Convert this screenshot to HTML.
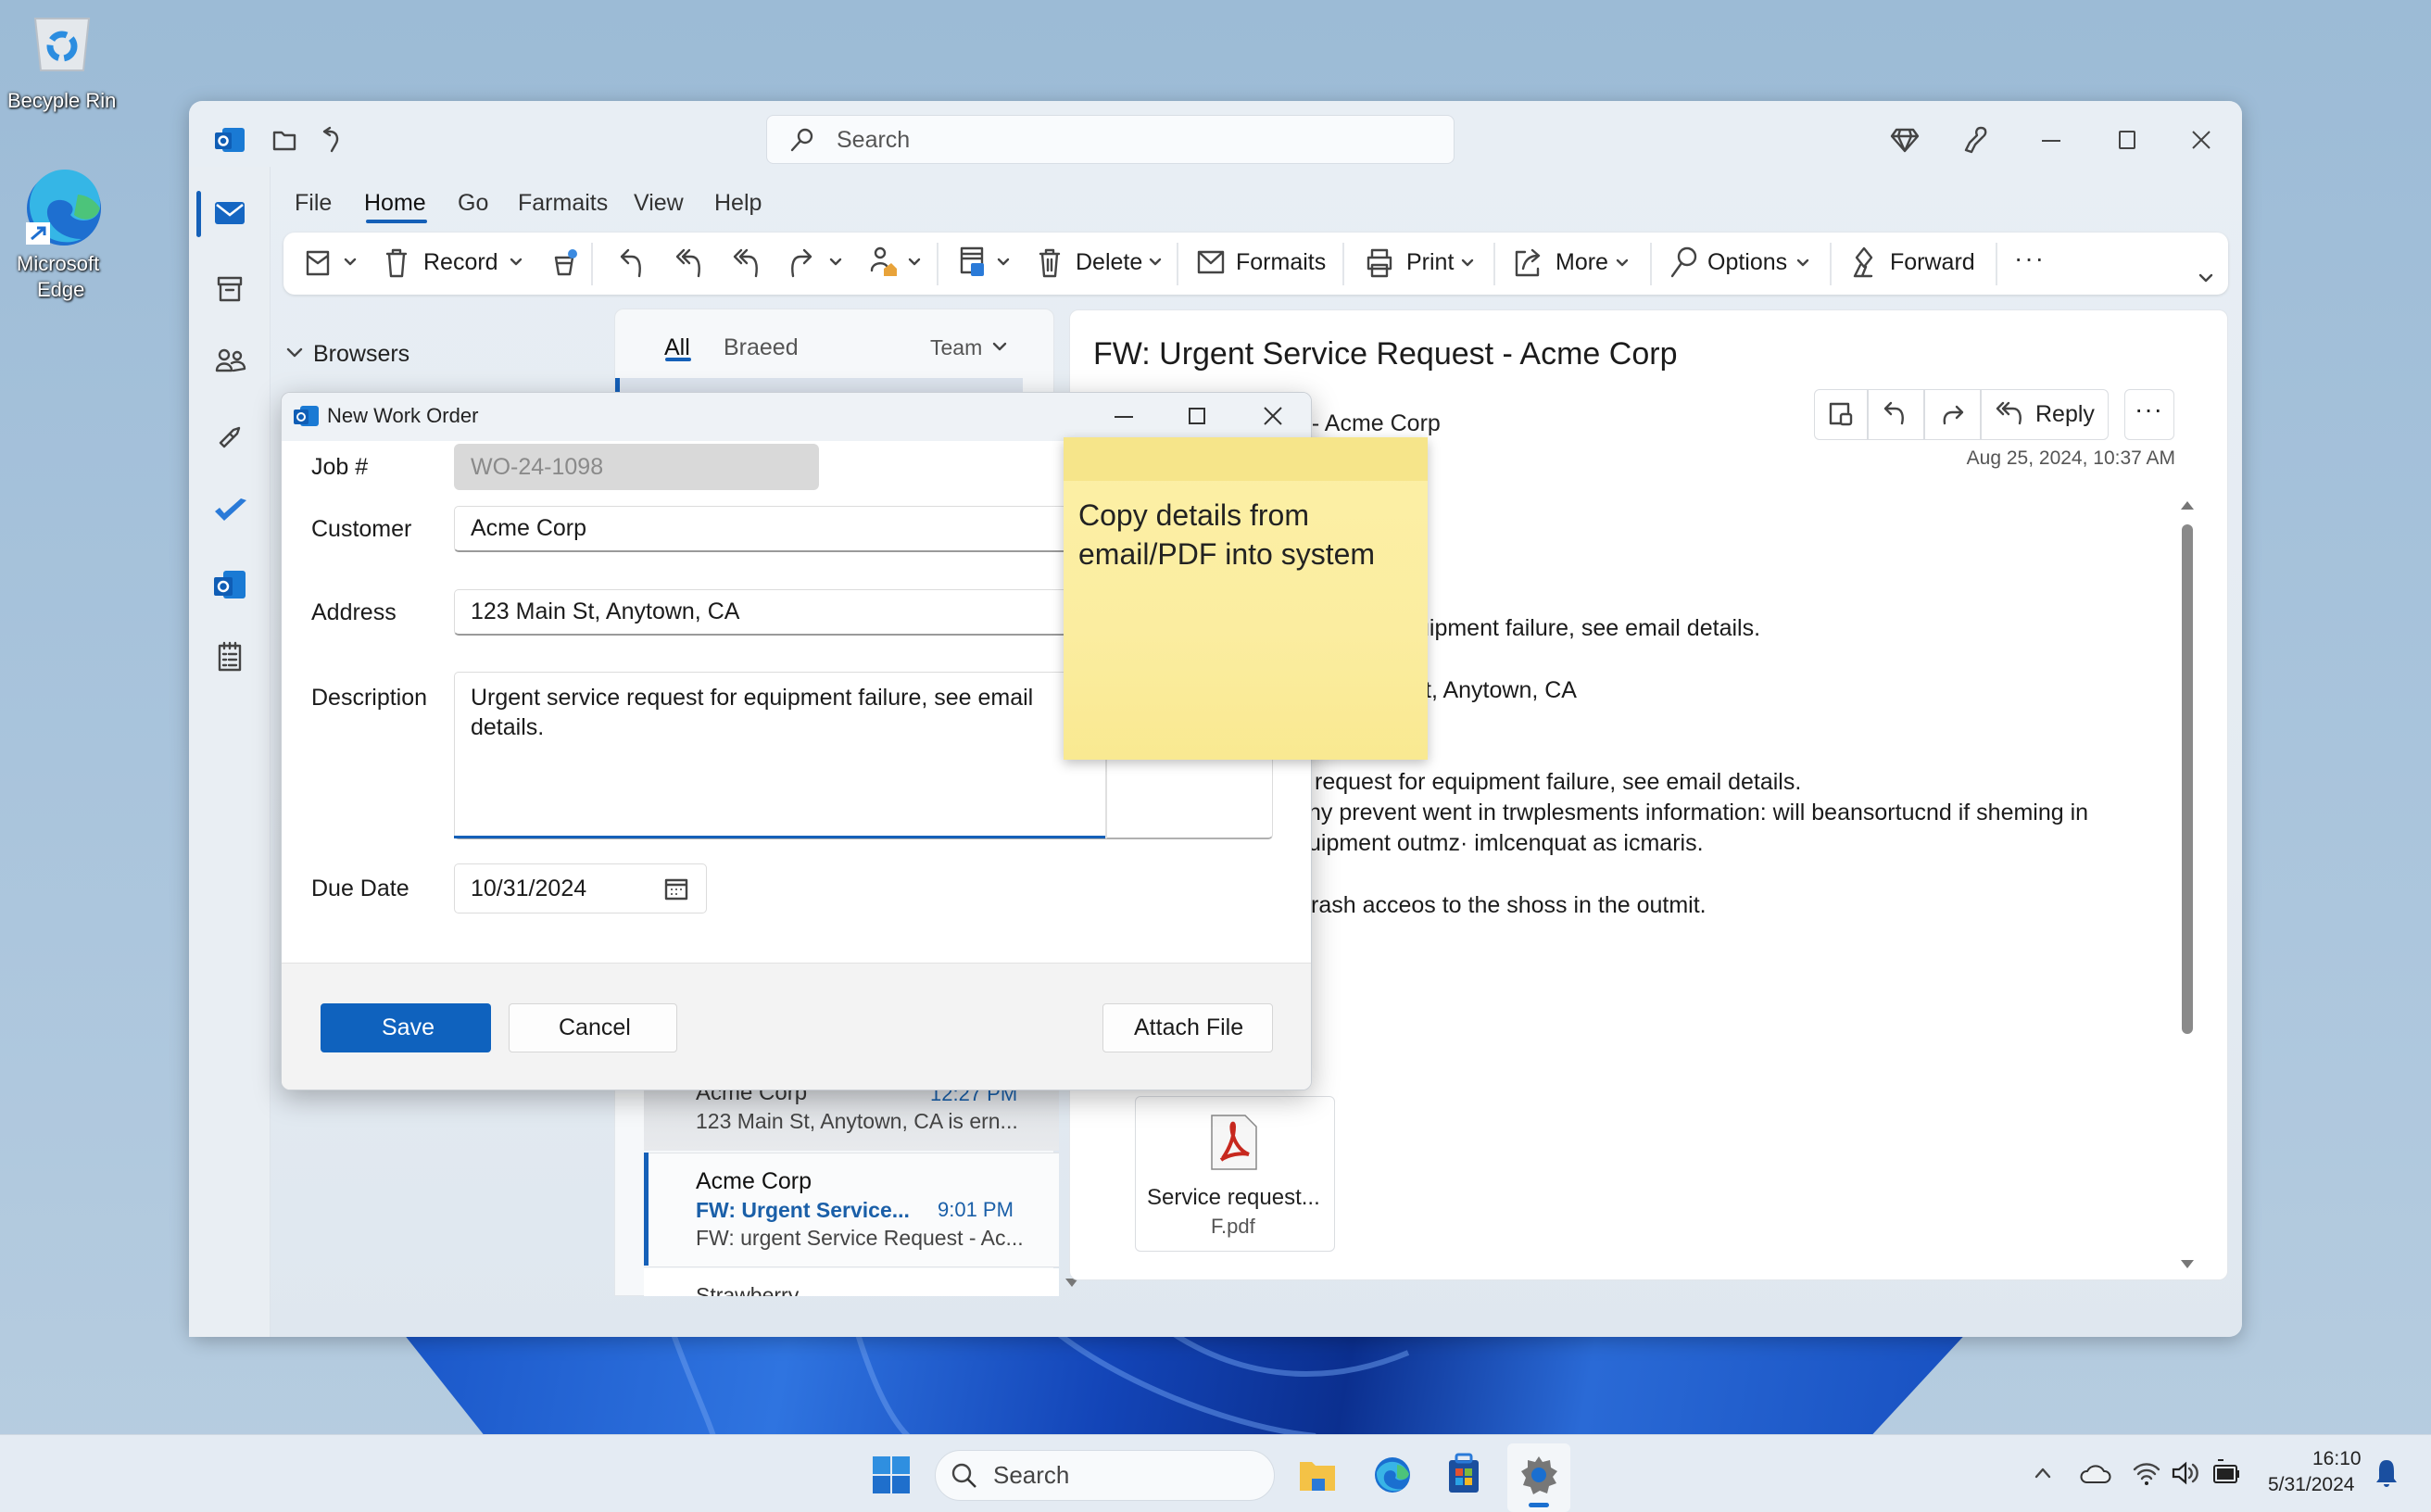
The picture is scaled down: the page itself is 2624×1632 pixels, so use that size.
<!DOCTYPE html>
<html><head><meta charset="utf-8">
<style>
*{margin:0;padding:0;box-sizing:border-box}
body{width:2624px;height:1632px;overflow:hidden;position:relative;font-family:"Liberation Sans",sans-serif;color:#1b1b1b;
background:linear-gradient(180deg,#9cbbd6 0%,#a9c4dc 50%,#b7cde0 100%)}
.a{position:absolute}
.t{position:absolute;white-space:nowrap;line-height:1.2}
svg{position:absolute;overflow:visible}
.sep{position:absolute;top:262px;width:2px;height:46px;background:#e3e6ea}
.ico{fill:none;stroke:#444;stroke-width:2.4;stroke-linecap:round;stroke-linejoin:round}
</style></head><body>

<!-- wallpaper bloom -->
<div class="a" style="left:420px;top:1420px;width:1720px;height:130px;background:linear-gradient(100deg,#1a56c8 0%,#2f74e0 25%,#1345b8 45%,#0b2f8f 60%,#2a6ad6 75%,#174fc0 100%);clip-path:polygon(0 0,100% 0,93% 100%,6% 100%)"></div>
<svg style="left:420px;top:1420px" width="1720" height="130"><path d="M700 0 C760 60 900 120 1000 130 M820 0 C880 50 980 90 1100 40 M300 0 C320 60 340 100 350 130 M500 0 C520 70 540 110 560 130" stroke="#6ea0ef" stroke-width="6" fill="none" opacity=".5"/></svg>

<!-- desktop icons -->
<svg style="left:34px;top:14px" width="66" height="68"><path d="M4 6 L62 6 L56 62 L10 62 Z" fill="#e4e8ec" stroke="#b9c0c8" stroke-width="2"/><circle cx="33" cy="36" r="13" fill="none" stroke="#2b8de0" stroke-width="7" stroke-dasharray="18 6"/></svg>
<div class="t" style="left:8px;top:96px;font-size:22px;color:#fff;text-shadow:0 0 3px #000,1px 1px 2px #000">Becyple Rin</div>
<svg style="left:24px;top:180px" width="90" height="90"><circle cx="45" cy="45" r="40" fill="#1e6fd0"/><path d="M8 40 A38 38 0 0 1 84 42 C84 60 60 62 52 52 C62 40 40 30 30 40 C20 52 35 78 64 78 A40 40 0 0 1 8 40Z" fill="#35b6e6"/><path d="M60 30 A30 30 0 0 1 84 45 C80 58 66 60 56 52Z" fill="#4cc47a"/><rect x="4" y="60" width="26" height="24" fill="#fff"/><path d="M10 78 L24 66 M16 66 L24 66 L24 74" stroke="#1e6fd0" stroke-width="3" fill="none"/></svg>
<div class="t" style="left:18px;top:272px;font-size:22px;color:#fff;text-shadow:0 0 3px #000,1px 1px 2px #000">Microsoft</div>
<div class="t" style="left:40px;top:300px;font-size:22px;color:#fff;text-shadow:0 0 3px #000,1px 1px 2px #000">Edge</div>

<!-- main window -->
<div class="a" style="left:204px;top:109px;width:2216px;height:1334px;border-radius:14px;background:linear-gradient(180deg,#e8eef4,#e4ebf2 60%,#dfe7ef);box-shadow:0 4px 20px rgba(0,0,0,.25)"></div>
<!-- left rail -->
<div class="a" style="left:204px;top:180px;width:88px;height:1263px;background:#e9eef3;border-right:1px solid #dde3ea"></div>
<div class="a" style="left:212px;top:206px;width:5px;height:50px;background:#1560b8;border-radius:3px"></div>
<!-- title bar icons -->
<svg style="left:230px;top:136px" width="36" height="32"><rect x="10" y="2" width="24" height="26" rx="3" fill="#1a7ad4"/><rect x="2" y="7" width="18" height="18" rx="2" fill="#0f5db5"/><circle cx="11" cy="16" r="4.5" fill="none" stroke="#fff" stroke-width="2.5"/></svg>
<svg style="left:294px;top:139px" width="26" height="24"><path class="ico" d="M2 4 H10 L13 7 H24 V22 H2 Z" stroke="#777" stroke-width="2"/></svg>
<svg style="left:346px;top:136px" width="22" height="30"><path class="ico" d="M4 6 L10 2 M4 6 L10 10 M4 6 H10 C18 6 20 14 16 20 L12 27" stroke="#777" stroke-width="2"/></svg>
<!-- search -->
<div class="a" style="left:827px;top:124px;width:743px;height:53px;background:#f9fbfd;border:1px solid #d8dee5;border-radius:8px"></div>
<svg style="left:852px;top:137px" width="28" height="28"><circle cx="17" cy="10" r="7" class="ico" stroke="#555" stroke-width="2.2"/><path d="M12 15 L3 25" class="ico" stroke="#555" stroke-width="2.2"/></svg>
<div class="t" style="left:903px;top:136px;font-size:25px;color:#555">Search</div>
<!-- right caption -->
<svg style="left:2041px;top:138px" width="30" height="26"><path class="ico" stroke="#666" stroke-width="2" d="M6 2 H24 L29 9 L15 25 L1 9 Z M1 9 H29 M10 2 L8 9 L15 25 L22 9 L20 2"/></svg>
<svg style="left:2118px;top:136px" width="28" height="30"><path class="ico" stroke="#666" stroke-width="2" d="M20 2 C26 2 27 8 22 12 L14 20 L10 28 L4 26 L8 18 L16 10 C14 6 16 2 20 2 Z"/></svg>
<div class="a" style="left:2204px;top:151px;width:20px;height:2px;background:#444"></div>
<div class="a" style="left:2287px;top:141px;width:18px;height:20px;border:2px solid #444;border-radius:2px"></div>
<svg style="left:2366px;top:141px" width="20" height="20"><path d="M1 1 L19 19 M19 1 L1 19" stroke="#444" stroke-width="2"/></svg>

<!-- rail icons -->
<svg style="left:231px;top:216px" width="34" height="28"><rect x="1" y="2" width="32" height="24" rx="3" fill="#1566c2"/><path d="M3 5 L17 16 L31 5" stroke="#fff" stroke-width="2.5" fill="none"/></svg>
<svg style="left:234px;top:298px" width="28" height="28"><path class="ico" stroke="#555" stroke-width="2.2" d="M2 2 H26 V9 H2 Z M4 9 V26 H24 V9 M10 15 H18"/></svg>
<svg style="left:232px;top:376px" width="34" height="28"><circle cx="10" cy="7" r="5" class="ico" stroke="#555" stroke-width="2"/><circle cx="24" cy="8" r="4" class="ico" stroke="#555" stroke-width="2"/><path class="ico" stroke="#555" stroke-width="2" d="M2 24 C2 14 18 14 18 24 Z M18 16 C24 13 32 15 32 22 L20 24"/></svg>
<svg style="left:234px;top:458px" width="28" height="26"><path class="ico" stroke="#556" stroke-width="2.2" d="M4 20 L18 6 L24 4 L22 10 L8 24 Z M4 20 L8 24 M14 10 L18 14"/></svg>
<svg style="left:230px;top:536px" width="38" height="30"><path d="M2 16 L12 26 L36 4 L30 2 L12 18 L7 12 Z" fill="#2a7ad8"/></svg>
<svg style="left:229px;top:614px" width="38" height="34"><rect x="12" y="2" width="24" height="30" rx="3" fill="#1a7ad4"/><rect x="2" y="9" width="20" height="20" rx="2" fill="#0f5db5"/><circle cx="12" cy="19" r="5" fill="none" stroke="#fff" stroke-width="2.5"/></svg>
<svg style="left:234px;top:693px" width="28" height="32"><path class="ico" stroke="#555" stroke-width="2" d="M3 4 H25 V30 H3 Z M8 1 V7 M14 1 V7 M20 1 V7 M7 13 H10 M13 13 H21 M7 19 H10 M13 19 H21 M7 25 H10 M13 25 H21"/></svg>

<!-- menu -->
<div class="t" style="left:318px;top:204px;font-size:25px;color:#333">File</div>
<div class="t" style="left:393px;top:204px;font-size:25px;color:#111">Home</div>
<div class="a" style="left:395px;top:237px;width:66px;height:4px;background:#1560b8;border-radius:2px"></div>
<div class="t" style="left:494px;top:204px;font-size:25px;color:#333">Go</div>
<div class="t" style="left:559px;top:204px;font-size:25px;color:#333">Farmaits</div>
<div class="t" style="left:684px;top:204px;font-size:25px;color:#333">View</div>
<div class="t" style="left:771px;top:204px;font-size:25px;color:#333">Help</div>

<!-- ribbon -->
<div class="a" style="left:306px;top:251px;width:2099px;height:67px;background:#fff;border-radius:12px;box-shadow:0 1px 3px rgba(0,0,0,.12)"></div>
<svg style="left:330px;top:270px" width="26" height="28"><path class="ico" d="M2 2 H24 V26 H2 Z M2 6 L13 14 L24 6"/></svg>
<svg style="left:371px;top:278px" width="14" height="10"><path class="ico" stroke-width="2" d="M2 2 L7 7 L12 2"/></svg>
<svg style="left:416px;top:268px" width="24" height="32"><path class="ico" d="M2 6 H22 M8 6 V2 H16 V6 M4 6 L6 30 H18 L20 6"/></svg>
<div class="t" style="left:457px;top:268px;font-size:25px">Record</div>
<svg style="left:550px;top:278px" width="14" height="10"><path class="ico" stroke-width="2" d="M2 2 L7 7 L12 2"/></svg>
<svg style="left:596px;top:268px" width="28" height="32"><path class="ico" d="M4 10 H22 L19 28 H7 Z M7 16 H19" stroke="#777"/><circle cx="22" cy="6" r="5" fill="#3b8ae0"/></svg>
<div class="sep" style="left:638px"></div>
<svg style="left:668px;top:268px" width="28" height="32"><path class="ico" stroke="#d6a23e" d="M10 2 L3 9 L10 16 M3 9 H14 C22 9 24 18 22 30"/></svg>
<svg style="left:728px;top:268px" width="32" height="32"><path class="ico" stroke="#555" d="M10 2 L3 9 L10 16 M16 2 L9 9 L16 16 M9 9 H18 C26 9 28 18 26 30"/></svg>
<svg style="left:790px;top:268px" width="32" height="32"><path class="ico" stroke="#555" d="M10 2 L3 9 L10 16 M16 2 L9 9 L16 16 M9 9 H18 C26 9 28 18 26 30"/></svg>
<svg style="left:850px;top:268px" width="28" height="32"><path class="ico" stroke="#3a6fb8" d="M18 2 L25 9 L18 16 M25 9 H14 C6 9 4 18 6 30"/></svg>
<svg style="left:895px;top:278px" width="14" height="10"><path class="ico" stroke-width="2" d="M2 2 L7 7 L12 2"/></svg>
<svg style="left:938px;top:266px" width="30" height="34"><circle cx="12" cy="7" r="5" class="ico" stroke="#3a6fb8"/><path class="ico" stroke="#3a6fb8" d="M3 26 C3 16 20 16 20 24"/><path d="M16 24 L24 18 L30 24 V32 H16 Z" fill="#e8a33a"/></svg>
<svg style="left:980px;top:278px" width="14" height="10"><path class="ico" stroke-width="2" d="M2 2 L7 7 L12 2"/></svg>
<div class="sep" style="left:1011px"></div>
<svg style="left:1036px;top:266px" width="30" height="34"><path class="ico" stroke="#555" d="M2 2 H24 V28 H2 Z M2 8 H24 M2 13 H24"/><rect x="12" y="18" width="14" height="14" rx="2" fill="#2a7ad8"/></svg>
<svg style="left:1076px;top:278px" width="14" height="10"><path class="ico" stroke-width="2" d="M2 2 L7 7 L12 2"/></svg>
<svg style="left:1121px;top:268px" width="24" height="32"><path class="ico" d="M2 6 H22 M8 6 V2 H16 V6 M4 6 L6 30 H18 L20 6 M10 12 V24 M14 12 V24"/></svg>
<div class="t" style="left:1161px;top:268px;font-size:25px">Delete</div>
<svg style="left:1240px;top:278px" width="14" height="10"><path class="ico" stroke-width="2" d="M2 2 L7 7 L12 2"/></svg>
<div class="sep" style="left:1270px"></div>
<svg style="left:1292px;top:270px" width="30" height="26"><path class="ico" d="M2 2 H28 V24 H2 Z M2 2 L15 14 L28 2"/></svg>
<div class="t" style="left:1334px;top:268px;font-size:25px">Formaits</div>
<div class="sep" style="left:1449px"></div>
<svg style="left:1474px;top:268px" width="30" height="32"><path class="ico" d="M7 10 V2 H23 V10 M3 10 H27 V22 H3 Z M7 18 H23 V30 H7 Z"/></svg>
<div class="t" style="left:1518px;top:268px;font-size:25px">Print</div>
<svg style="left:1578px;top:280px" width="12" height="8"><path class="ico" stroke-width="1.8" d="M1 1 L6 6 L11 1"/></svg>
<div class="sep" style="left:1612px"></div>
<svg style="left:1634px;top:268px" width="32" height="32"><path class="ico" stroke="#2a6fc4" d="M12 4 H3 V29 H26 V22 M10 22 C12 12 18 8 26 8 M20 2 L27 8 L20 14"/></svg>
<div class="t" style="left:1679px;top:268px;font-size:25px">More</div>
<svg style="left:1745px;top:280px" width="12" height="8"><path class="ico" stroke-width="1.8" d="M1 1 L6 6 L11 1"/></svg>
<div class="sep" style="left:1781px"></div>
<svg style="left:1802px;top:266px" width="30" height="34"><circle cx="19" cy="11" r="9" class="ico"/><path class="ico" d="M13 18 L3 32"/></svg>
<div class="t" style="left:1843px;top:268px;font-size:25px">Options</div>
<svg style="left:1940px;top:280px" width="12" height="8"><path class="ico" stroke-width="1.8" d="M1 1 L6 6 L11 1"/></svg>
<div class="sep" style="left:1975px"></div>
<svg style="left:1998px;top:266px" width="30" height="34"><path class="ico" stroke="#c9493a" stroke-width="2" d="M14 2 L22 12 L14 22 L6 12 Z"/><path class="ico" stroke="#2a6fc4" stroke-width="2" d="M10 20 L4 32 H12 M16 22 L12 32 H22"/></svg>
<div class="t" style="left:2040px;top:268px;font-size:25px">Forward</div>
<div class="sep" style="left:2154px"></div>
<div class="t" style="left:2174px;top:262px;font-size:28px;letter-spacing:2px;color:#333">···</div>
<svg style="left:2374px;top:296px" width="14" height="10"><path class="ico" stroke-width="1.8" d="M1 1 L7 7 L13 1"/></svg>

<!-- folder pane -->
<svg style="left:310px;top:376px" width="16" height="10"><path class="ico" stroke-width="2" d="M1 1 L8 8 L15 1"/></svg>
<div class="t" style="left:338px;top:367px;font-size:25px;color:#222">Browsers</div>

<!-- message list panel -->
<div class="a" style="left:663px;top:333px;width:475px;height:1066px;background:#f6f8fa;border-radius:10px 10px 0 0;border:1px solid #e2e6eb"></div>
<div class="t" style="left:717px;top:360px;font-size:25px;color:#111">All</div>
<div class="a" style="left:718px;top:386px;width:28px;height:4px;background:#1560b8;border-radius:2px"></div>
<div class="t" style="left:781px;top:360px;font-size:25px;color:#555">Braeed</div>
<div class="t" style="left:1004px;top:362px;font-size:23px;color:#555">Team</div>
<svg style="left:1072px;top:370px" width="14" height="10"><path class="ico" stroke-width="2" d="M1 1 L7 7 L13 1"/></svg>
<div class="a" style="left:664px;top:408px;width:440px;height:16px;background:#dde4ee;border-left:5px solid #1560b8"></div>
<!-- items under dialog -->
<div class="a" style="left:695px;top:1160px;width:448px;height:82px;background:linear-gradient(180deg,#dcdfe3,#e8eaed)"></div>
<div class="t" style="left:751px;top:1166px;font-size:24px;color:#333">Acme Corp</div>
<div class="t" style="left:1004px;top:1168px;font-size:22px;color:#1a5fa8">12:27 PM</div>
<div class="t" style="left:751px;top:1197px;font-size:23px;color:#444">123 Main St, Anytown, CA is ern...</div>
<div class="a" style="left:695px;top:1244px;width:448px;height:124px;background:#fafbfc;border-top:1px solid #e0e3e7;border-bottom:1px solid #e0e3e7"></div>
<div class="a" style="left:695px;top:1244px;width:5px;height:122px;background:#1560b8"></div>
<div class="t" style="left:751px;top:1260px;font-size:25px;color:#111">Acme Corp</div>
<div class="t" style="left:751px;top:1293px;font-size:23px;color:#1a5fa8;font-weight:bold">FW: Urgent Service...</div>
<div class="t" style="left:1012px;top:1293px;font-size:22px;color:#1a5fa8">9:01 PM</div>
<div class="t" style="left:751px;top:1323px;font-size:23px;color:#444">FW: urgent Service Request - Ac...</div>
<div class="a" style="left:695px;top:1369px;width:448px;height:30px;background:#fff;overflow:hidden"><div class="t" style="left:56px;top:16px;font-size:23px;color:#333">Strawberry</div></div>
<svg style="left:1150px;top:1380px" width="14" height="10"><path d="M0 0 H14 L7 9 Z" fill="#777"/></svg>

<!-- reading pane -->
<div class="a" style="left:1154px;top:334px;width:1251px;height:1048px;background:#fff;border-radius:10px;border:1px solid #e2e6eb"></div>
<div class="t" style="left:1180px;top:362px;font-size:34px;color:#1b1b1b">FW: Urgent Service Request - Acme Corp</div>
<div class="a" style="left:1958px;top:420px;width:318px;height:55px;border:1.5px solid #dadde1;border-radius:6px;background:#fff"></div>
<div class="a" style="left:2015px;top:420px;width:1.5px;height:55px;background:#dadde1"></div>
<div class="a" style="left:2076px;top:420px;width:1.5px;height:55px;background:#dadde1"></div>
<div class="a" style="left:2137px;top:420px;width:1.5px;height:55px;background:#dadde1"></div>
<svg style="left:1973px;top:433px" width="28" height="28"><path class="ico" stroke="#555" stroke-width="2" d="M3 3 H22 V12 M3 3 V24 H14"/><rect x="14" y="14" width="11" height="11" rx="2" class="ico" stroke="#2a6fc4" stroke-width="2"/></svg>
<svg style="left:2032px;top:433px" width="28" height="28"><path class="ico" stroke="#666" stroke-width="2" d="M9 2 L3 8 L9 14 M3 8 H14 C21 8 23 16 21 24"/></svg>
<svg style="left:2094px;top:433px" width="28" height="28"><path class="ico" stroke="#999" stroke-width="2" d="M18 6 L24 12 L18 18 M24 12 H13 C6 12 4 18 5 24"/></svg>
<svg style="left:2153px;top:433px" width="34" height="28"><path class="ico" stroke="#555" stroke-width="2" d="M9 2 L3 8 L9 14 M15 2 L9 8 L15 14 M9 8 H20 C27 8 29 16 27 24"/></svg>
<div class="t" style="left:2197px;top:432px;font-size:25px;color:#222">Reply</div>
<div class="a" style="left:2293px;top:420px;width:54px;height:55px;border:1.5px solid #dadde1;border-radius:6px;background:#fff"></div>
<div class="t" style="left:2304px;top:425px;font-size:28px;letter-spacing:1px;color:#222">···</div>
<div class="t" style="left:1402px;top:442px;font-size:25px;color:#222">t - Acme Corp</div>
<div class="t" style="right:276px;top:482px;font-size:21px;color:#555">Aug 25, 2024, 10:37 AM</div>
<!-- scrollbar -->
<svg style="left:2354px;top:541px" width="14" height="10"><path d="M0 9 H14 L7 0 Z" fill="#777"/></svg>
<div class="a" style="left:2355px;top:566px;width:12px;height:550px;background:#8a8a8a;border-radius:6px"></div>
<svg style="left:2354px;top:1360px" width="14" height="10"><path d="M0 0 H14 L7 9 Z" fill="#777"/></svg>
<!-- body -->
<div class="t" style="left:1529px;top:663px;font-size:25px">uipment failure, see email details.</div>
<div class="t" style="left:1538px;top:730px;font-size:25px">t, Anytown, CA</div>
<div class="t" style="left:1419px;top:829px;font-size:25px">request for equipment failure, see email details.</div>
<div class="t" style="left:1412px;top:862px;font-size:25px">ny prevent went in trwplesments information: will beansortucnd if sheming in</div>
<div class="t" style="left:1412px;top:895px;font-size:25px">uipment outmz· imlcenquat as icmaris.</div>
<div class="t" style="left:1415px;top:962px;font-size:25px">rash acceos to the shoss in the outmit.</div>
<!-- attachment -->
<div class="a" style="left:1225px;top:1183px;width:216px;height:168px;border:1.5px solid #dadde1;border-radius:6px;background:#fff"></div>
<svg style="left:1306px;top:1202px" width="52" height="62"><path d="M2 2 H38 L50 14 V60 H2 Z" fill="#f6f6f6" stroke="#888" stroke-width="1.5"/><path d="M14 48 C22 36 26 24 26 14 C26 8 22 10 24 20 C26 30 32 40 42 44 C34 42 20 44 12 50" fill="none" stroke="#c7281e" stroke-width="4"/></svg>
<div class="t" style="left:1238px;top:1279px;font-size:24px;color:#222">Service request...</div>
<div class="t" style="left:1307px;top:1311px;font-size:22px;color:#555">F.pdf</div>

<!-- dialog -->
<div class="a" style="left:303px;top:423px;width:1113px;height:754px;background:#fff;border:1px solid #c9ced4;border-radius:10px;box-shadow:0 8px 30px rgba(0,0,0,.28);overflow:hidden">
  <div class="a" style="left:0;top:0;width:1113px;height:52px;background:#eef2f6"></div>
  <div class="a" style="left:0;top:615px;width:1113px;height:140px;background:#f3f3f3;border-top:1px solid #e2e2e2"></div>
</div>
<svg style="left:315px;top:436px" width="30" height="28"><rect x="9" y="2" width="20" height="22" rx="3" fill="#1a7ad4"/><rect x="2" y="6" width="16" height="16" rx="2" fill="#0f5db5"/><circle cx="10" cy="14" r="4" fill="none" stroke="#fff" stroke-width="2"/></svg>
<div class="t" style="left:353px;top:436px;font-size:22px;color:#222">New Work Order</div>
<div class="a" style="left:1203px;top:449px;width:20px;height:2px;background:#333"></div>
<div class="a" style="left:1283px;top:440px;width:18px;height:18px;border:2px solid #333"></div>
<svg style="left:1364px;top:439px" width="20" height="20"><path d="M1 1 L19 19 M19 1 L1 19" stroke="#333" stroke-width="2"/></svg>
<div class="t" style="left:336px;top:489px;font-size:25px">Job #</div>
<div class="t" style="left:336px;top:556px;font-size:25px">Customer</div>
<div class="t" style="left:336px;top:646px;font-size:25px">Address</div>
<div class="t" style="left:336px;top:738px;font-size:25px">Description</div>
<div class="t" style="left:336px;top:944px;font-size:25px">Due Date</div>
<div class="a" style="left:490px;top:479px;width:394px;height:50px;background:#d9d9d9;border-radius:6px"></div>
<div class="t" style="left:508px;top:489px;font-size:25px;color:#8a8a8a">WO-24-1098</div>
<div class="a" style="left:490px;top:546px;width:884px;height:50px;border:1.5px solid #dcdcdc;border-bottom:2px solid #9a9a9a;border-radius:5px"></div>
<div class="t" style="left:508px;top:555px;font-size:25px">Acme Corp</div>
<div class="a" style="left:490px;top:636px;width:884px;height:50px;border:1.5px solid #dcdcdc;border-bottom:2px solid #9a9a9a;border-radius:5px"></div>
<div class="t" style="left:508px;top:645px;font-size:25px">123 Main St, Anytown, CA</div>
<div class="a" style="left:490px;top:725px;width:884px;height:181px;border:1.5px solid #dcdcdc;border-bottom:2px solid #b0b0b0;border-radius:5px"></div>
<div class="a" style="left:1193px;top:725px;width:1.5px;height:180px;background:#e0e0e0"></div>
<div class="a" style="left:490px;top:902px;width:703px;height:3px;background:#1560b8"></div>
<div class="t" style="left:508px;top:737px;font-size:25px;line-height:32px">Urgent service request for equipment failure, see email<br>details.</div>
<div class="a" style="left:490px;top:932px;width:273px;height:54px;border:1.5px solid #dcdcdc;border-radius:5px"></div>
<div class="t" style="left:508px;top:944px;font-size:25px">10/31/2024</div>
<svg style="left:717px;top:946px" width="26" height="26"><path class="ico" stroke="#666" stroke-width="1.8" d="M2 4 H24 V24 H2 Z M2 9 H24"/><path d="M7 14 h2 M12 14 h2 M17 14 h2 M7 19 h2 M12 19 h2" stroke="#666" stroke-width="2"/></svg>
<div class="a" style="left:346px;top:1083px;width:184px;height:53px;background:#0f62be;border-radius:4px"></div>
<div class="t" style="left:412px;top:1094px;font-size:25px;color:#fff">Save</div>
<div class="a" style="left:549px;top:1083px;width:182px;height:53px;background:#fdfdfd;border:1.5px solid #d6d6d6;border-radius:4px"></div>
<div class="t" style="left:603px;top:1094px;font-size:25px">Cancel</div>
<div class="a" style="left:1190px;top:1083px;width:184px;height:53px;background:#fdfdfd;border:1.5px solid #d6d6d6;border-radius:4px"></div>
<div class="t" style="left:1224px;top:1094px;font-size:25px">Attach File</div>

<!-- sticky note -->
<div class="a" style="left:1148px;top:472px;width:393px;height:348px;background:linear-gradient(180deg,#fcf0a6,#fbeda0 60%,#f9e991);box-shadow:0 4px 12px rgba(0,0,0,.25)"></div>
<div class="a" style="left:1148px;top:472px;width:393px;height:47px;background:#f6e58a"></div>
<div class="t" style="left:1164px;top:535px;font-size:32px;line-height:42px;color:#222">Copy details from<br>email/PDF into system</div>

<!-- taskbar -->
<div class="a" style="left:0;top:1548px;width:2624px;height:84px;background:#e4ebf3;border-top:1px solid #cfd8e2"></div>
<svg style="left:942px;top:1572px" width="40" height="40"><rect x="0" y="0" width="19" height="19" fill="#2f8fe0"/><rect x="21" y="0" width="19" height="19" fill="#2f8fe0"/><rect x="0" y="21" width="19" height="19" fill="#1f6fcc"/><rect x="21" y="21" width="19" height="19" fill="#1f6fcc"/></svg>
<div class="a" style="left:1009px;top:1565px;width:367px;height:55px;background:#f8fafc;border:1px solid #d5dce4;border-radius:28px"></div>
<svg style="left:1026px;top:1578px" width="30" height="30"><circle cx="12" cy="12" r="9" class="ico" stroke="#333" stroke-width="2.5"/><path d="M18 18 L27 27" stroke="#333" stroke-width="2.5"/></svg>
<div class="t" style="left:1072px;top:1577px;font-size:26px;color:#444">Search</div>
<svg style="left:1402px;top:1572px" width="40" height="38"><path d="M1 6 H14 L18 10 H39 V37 H1 Z" fill="#f4c246"/><rect x="14" y="24" width="14" height="13" fill="#2a7ad8"/></svg>
<svg style="left:1482px;top:1571px" width="42" height="42"><circle cx="21" cy="21" r="19" fill="#1a6fd0"/><path d="M4 18 A18 18 0 0 1 38 20 C36 28 26 28 24 24 C28 16 14 12 12 22 C10 32 22 38 32 36 A19 19 0 0 1 4 18Z" fill="#38b4e6"/><path d="M26 10 A16 16 0 0 1 39 20 C37 27 30 27 26 24Z" fill="#4cc47a"/></svg>
<svg style="left:1562px;top:1568px" width="36" height="44"><rect x="2" y="8" width="32" height="35" rx="3" fill="#1b4f9e"/><rect x="10" y="2" width="16" height="8" rx="2" fill="none" stroke="#2a7ad8" stroke-width="3"/><rect x="9" y="17" width="8" height="8" fill="#e3522f"/><rect x="19" y="17" width="8" height="8" fill="#7fb93a"/><rect x="9" y="27" width="8" height="8" fill="#2aa3e6"/><rect x="19" y="27" width="8" height="8" fill="#f4b823"/></svg>
<div class="a" style="left:1627px;top:1558px;width:68px;height:74px;background:#f3f6f9;border-radius:6px"></div>
<svg style="left:1640px;top:1570px" width="42" height="44"><path d="M21 2 L25 8 L33 6 L34 14 L41 18 L36 24 L40 31 L32 34 L30 42 L22 39 L15 43 L12 35 L4 33 L7 25 L2 18 L9 14 L9 6 L17 8 Z" fill="#777"/><circle cx="21" cy="22" r="8" fill="#1a6fd0"/></svg>
<div class="a" style="left:1650px;top:1622px;width:22px;height:5px;background:#1a6fd0;border-radius:3px"></div>
<svg style="left:2196px;top:1584px" width="18" height="12"><path class="ico" stroke="#222" stroke-width="2" d="M2 10 L9 2 L16 10"/></svg>
<svg style="left:2244px;top:1576px" width="34" height="28"><path d="M8 24 H28 A6 6 0 0 0 27 12 A10 10 0 0 0 9 12 A6 6 0 0 0 8 24Z" fill="#eef1f4" stroke="#333" stroke-width="2"/></svg>
<svg style="left:2302px;top:1576px" width="30" height="28"><path class="ico" stroke="#222" stroke-width="2.4" d="M2 10 A18 18 0 0 1 28 10 M6 15 A12 12 0 0 1 24 15 M10 20 A6 6 0 0 1 20 20"/><circle cx="15" cy="25" r="2" fill="#222"/></svg>
<svg style="left:2344px;top:1576px" width="30" height="28"><path d="M2 10 H8 L15 4 V24 L8 18 H2 Z" fill="none" stroke="#222" stroke-width="2.2"/><path class="ico" stroke="#222" stroke-width="2" d="M19 9 A6 6 0 0 1 19 19 M23 5 A11 11 0 0 1 23 23"/></svg>
<svg style="left:2388px;top:1574px" width="32" height="30"><rect x="2" y="8" width="24" height="18" rx="2" fill="none" stroke="#222" stroke-width="2"/><rect x="5" y="11" width="18" height="12" fill="#222"/><rect x="26" y="13" width="3" height="8" fill="#222"/><path d="M6 2 H12" stroke="#222" stroke-width="2"/></svg>
<div class="t" style="left:2496px;top:1562px;font-size:21px;color:#222">16:10</div>
<div class="t" style="left:2448px;top:1590px;font-size:21px;color:#222">5/31/2024</div>
<svg style="left:2564px;top:1574px" width="24" height="32"><path d="M12 2 C5 2 4 8 4 14 V22 L1 26 H23 L20 22 V14 C20 8 19 2 12 2Z M9 28 A3 3 0 0 0 15 28" fill="#1a4fa0"/></svg>
</body></html>
